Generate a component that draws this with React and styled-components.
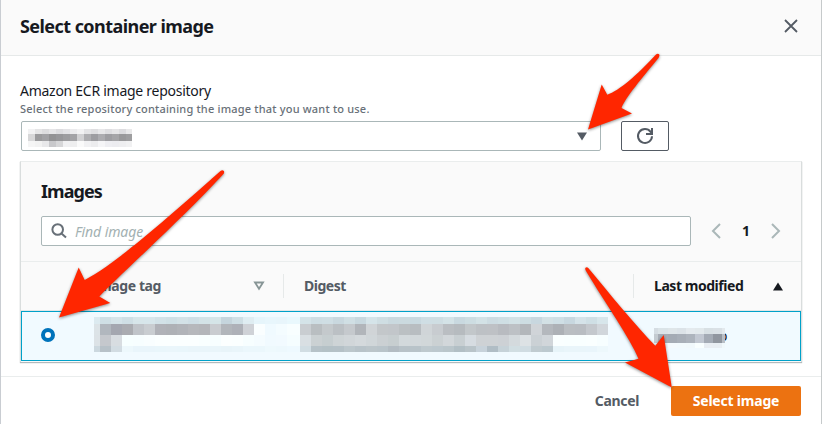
import React from "react";
import styled, { createGlobalStyle } from "styled-components";

const Global = createGlobalStyle`
  * { box-sizing: border-box; }
  body { margin: 0; background: #fff; font-family: "Noto Sans", "Open Sans", sans-serif; }
  h1 { margin: 0; }
  button, input { font-family: inherit; }
`;

const Modal = styled.section`
  position: relative;
  width: 822px;
  height: 424px;
  overflow: hidden;
  border-left: 1px solid #c9cdd2;
  border-right: 1px solid #c6cacb;
  background: #fff;
  color: #16191f;
  display: flex;
  flex-direction: column;
`;

const Header = styled.header`
  height: 56px;
  flex: none;
  display: flex;
  justify-content: space-between;
  align-items: center;
  padding: 0 22px 3px 19px;
  background: #fafafa;
  border-bottom: 1px solid #e6e9e9;
`;

const Text = styled.span`
  display: block;
  white-space: nowrap;
  font-size: ${(p) => p.$size || 14}px;
  line-height: ${(p) => p.$line || 20}px;
  font-weight: ${(p) => p.$weight || 400};
  letter-spacing: ${(p) => p.$track || 0}px;
  color: ${(p) => p.$color || "#16191f"};
`;

const IconButton = styled.button`
  display: flex;
  align-items: center;
  justify-content: center;
  padding: 0;
  border: 0;
  background: none;
  svg { display: block; }
`;

const Body = styled.main`
  height: 320px;
  flex: none;
  padding: 25px 19px 0;
`;

const PickerRow = styled.div`
  display: flex;
  gap: 20px;
  margin: 4px 0 0 1px;
`;

const Select = styled.div`
  width: 580px;
  height: 30px;
  border: 1px solid #aab7b8;
  border-radius: 2px;
  display: flex;
  justify-content: space-between;
  align-items: flex-start;
  padding: 7px 12px 0 6px;
`;

const Caret = styled.svg`
  display: block;
  margin-top: ${(p) => p.$top || 0}px;
`;

const Refresh = styled(IconButton)`
  width: 48px;
  height: 30px;
  border: 1px solid #545b64;
  border-radius: 2px;
`;

const Panel = styled.section`
  width: 782px;
  height: 201px;
  margin-top: 10px;
  border: 1px solid #d9dddd;
  border-top-color: #eaeded;
  border-bottom: 0;
  background: #fafafa;
  box-shadow: 0 1px 1px rgba(0, 28, 36, 0.3);
`;

const PanelTop = styled.div`
  height: 100px;
  padding: 17px 19px 0 20px;
  border-bottom: 1px solid #eaeded;
`;

const SearchRow = styled.div`
  display: flex;
  align-items: center;
  margin-top: 12px;
`;

const Search = styled.label`
  width: 650px;
  height: 30px;
  display: flex;
  align-items: center;
  gap: 8px;
  padding-left: 9px;
  border: 1px solid #aab7b8;
  border-radius: 2px;
  background: #fff;
`;

const SearchInput = styled.input`
  flex: 1;
  border: 0;
  outline: 0;
  padding: 0;
  background: none;
  font-size: 14px;
  font-style: italic;
  letter-spacing: -0.1px;
  &::placeholder { color: #a3b1b2; opacity: 1; }
`;

const Pager = styled.nav`
  display: flex;
  align-items: center;
  justify-content: space-between;
  width: 70px;
  margin-left: 20px;
`;

const TableHead = styled.div`
  height: 49px;
  display: grid;
  grid-template-columns: 263px 350px 167px;
  align-items: center;
  border-bottom: 1px solid #e3e6e6;
`;

const HeadCell = styled.div`
  height: 24px;
  display: flex;
  align-items: center;
  justify-content: space-between;
  padding: 0 ${(p) => (p.$last ? 17 : 18)}px 0 ${(p) => p.$left || 20}px;
  border-right: ${(p) => (p.$last ? "0" : "1px solid #e6e9e9")};
`;

const Row = styled.div`
  height: 50px;
  display: grid;
  grid-template-columns: 72px 206px 354px 1fr;
  border: 1px solid #00a1c9;
  background: #f1faff;
`;

const Cell = styled.div`
  display: flex;
  align-items: flex-start;
  padding: ${(p) => p.$pad || "5px 0 0"};
`;

const Radio = styled.span`
  width: 14px;
  height: 14px;
  border: 4px solid #0073bb;
  border-radius: 50%;
  background: #fff;
`;

const Mosaic = styled.div`
  display: grid;
  z-index: 1;
  grid-template-columns: ${(p) => p.$cols};
  grid-template-rows: ${(p) => p.$rows};
`;

const Pixel = styled.i`
  position: relative;
  background: ${(p) => p.$c};
`;

const Trailing = styled.div`
  margin: -2px 0 0 -6px;
`;

const Footer = styled.footer`
  flex: 1;
  display: flex;
  align-items: flex-start;
  justify-content: flex-end;
  gap: 32px;
  padding: 9px 20px 0;
  border-top: 1px solid #eaeded;
`;

const FooterButton = styled.button`
  height: 30px;
  width: ${(p) => (p.$primary ? "130px" : "auto")};
  display: flex;
  align-items: center;
  justify-content: center;
  padding: 0;
  border: 0;
  border-radius: 2px;
  background: ${(p) => (p.$primary ? "#ec7211" : "transparent")};
`;

const Arrows = styled.svg`
  position: absolute;
  top: 0;
  left: -1px;
  z-index: 2;
  pointer-events: none;
  path { fill: #ff2600; filter: drop-shadow(0 1.5px 1.5px rgba(0, 0, 0, 0.45)); }
`;

const repo = [
  "f2f2f3 e5e5e6 dddddf e5e5e7 dcdcdf e3e3e6 ebebed f2f2f3 e4e4e6 dedee0 e7e7e9 dedee1 e5e5e7 dcdcdf e9e9ea",
  "d7d7d8 9b9b9d a2a2a5 929294 97979a 9d9da0 a3a3a6 d1d1d3 aeaeb1 9d9da1 acacb0 9e9ea2 a5a5a8 99999b 9e9ea0",
  "f5f5f5 f2f2f2 e8e8ea c8c8cb d6d6d8 f0f0f2 eeeeef fafafa f1f1f3 ececee f5f5f7 eeeef2 ececf0 eeeef0 f1f1f2",
];
const tag = [
  "dceaf0 cfdfe5 d5e4e9 cfdfe5 d7e6ea d7e6eb d2e2e8 cfe0e6 d3e2e7 cfdfe6 d3e3e7 d5e5e8 c5d5dd cfdfe5 dfedf2 e6f5fb e8f6fc e8f5fb e9f8fd",
  "dce3e7 b1b7be a4a7b0 aaacb1 c0c4c9 c9cdd1 b0b2b8 aeb1b6 b1b4b9 b6b8bc b4b6ba c9ccd0 b2b6bb aeb1b8 cfd2d7 fafeff f0faff f4fcff f8feff",
  "dce2e6 c5c8cd d8dde1 f7ffff f7feff f9feff fbffff fbffff fbffff fbffff f9ffff f7feff fcffff fbffff f7feff f5fcff f1faff f2faff f5fdff",
  "ccd8df b7c1c8 d2dce2 edf8fc e9f5fb e9f5fb e9f6fb eaf6fb e9f6fb e9f5fa e9f5fa e9f5fa e8f4f9 e9f5fa ebf7fc ebf7fc eef9fd edf8fd eef9ff",
];
const digest = [
  "d4e3e8 cedde3 cfdee4 c9d8df d0dfe4 c8d8df d5e4e9 cfdee3 cad9df cbdadf c9d9e0 cfdee4 cfdee3 d4e3e7 c9d9e0 cddde2 d3e2e6 cddce2 cfdfe4 d3e2e6 cddde2 c8d7df d3e1e5 cfdfe5 c8d8e0 d5e3e9 cfdfe5 d7e6eb",
  "c9cdd1 b9bec1 c4c9cc bbc0c4 c5c9cd b1b5ba d0d4d7 c3c7ca c2c6ca bbc0c3 b8bdc1 d0d5d8 c8ccd0 babec2 b6bbbf c2c7ca bdc1c5 bec1c5 b8bbc0 bdc1c5 b3b7bb d0d4d8 b4b8bd adb1b6 babec2 b9bdc2 c4c8cd d1d6db",
  "d9dfe3 cbd1d3 c6ced0 ced4d6 d1d6d9 d4d9dc d0d6d9 cbd0d3 c7ced0 d3d9dc d2d8db d1d7d9 cbd1d3 d2d7da c8cfd2 d6dce1 ced2d5 ced2d5 cdd1d5 d4dadd dde2e5 cbd1d5 d1d6da faffff f9ffff f9ffff faffff f7feff",
  "d1dde3 b6c2c8 b4c1c6 b5c1c7 bcc7cc b8c3c9 bbc5ca b9c4ca b3bcc3 b8c2c8 b8c3c9 bec9ce bcc8ce bac6cb b2bfc5 b9c4c9 c7d2da b0bdc5 c6d2d8 d1dee2 d0dce2 c0cbd0 bcc9cf e7f4f9 e9f5fa e9f5fa e9f5fb edf8fc",
];
const modified = [
  "d5dde3 dbe4e8 dfe6e9 dce3e8 e4eaee e2e9ec d8e0e4 dae1e6 e3e9ed",
  "c4cbd1 a7adb6 a4abb4 a8afb8 adb4bd c2c8d2 a4abb5 90969f b8bec6",
  "f0f8fc edf6fa f4fafd f2fafd f1f9fc f9ffff e9eef3 e8eef3 f0f8fb",
];

function Redacted({ rows, cols, heights }) {
  return (
    <Mosaic $cols={cols} $rows={heights}>
      {rows.flatMap((r, y) => r.split(" ").map((c, x) => <Pixel key={`${y}-${x}`} $c={`#${c}`} />))}
    </Mosaic>
  );
}

export default function App() {
  return (
    <>
      <Global />
      <Modal>
        <Header>
          <Text as="h1" $size={18} $line={24} $weight={700} $track={-0.56}>Select container image</Text>
          <IconButton aria-label="Close">
            <svg width="16" height="16" viewBox="0 0 16 16" fill="none" stroke="#545b64" strokeWidth="1.8">
              <path d="M2 2l12 12M14 2L2 14" />
            </svg>
          </IconButton>
        </Header>
        <Body>
          <Text $track={-0.27}>Amazon ECR image repository</Text>
          <Text $size={11} $line={16} $weight={500} $track={0.19} $color="#687078">Select the repository containing the image that you want to use.</Text>
          <PickerRow>
            <Select>
              <Redacted rows={repo} cols="repeat(14, 7px) 6px" heights="5px 7px 6px" />
              <Caret $top={3} width="12" height="9" viewBox="0 0 12 9"><path d="M1 .5h10L6 8.5z" fill="#545b64" /></Caret>
            </Select>
            <Refresh aria-label="Refresh">
              <svg width="18" height="18" viewBox="0 0 18 18" fill="none" stroke="#545b64" strokeWidth="2">
                <path d="M16 9.2A7 7 0 1 1 14.6 4.8L16 6.2" />
                <path d="M16 1v6h-6" />
              </svg>
            </Refresh>
          </PickerRow>
          <Panel>
            <PanelTop>
              <Text $size={18} $line={25} $weight={700} $track={-0.95}>Images</Text>
              <SearchRow>
                <Search>
                  <svg width="16" height="16" viewBox="0 0 16 16" fill="none" stroke="#687078" strokeWidth="2">
                    <circle cx="6.7" cy="6.5" r="5.3" />
                    <path d="M10.5 10.5l4.5 4" />
                  </svg>
                  <SearchInput placeholder="Find image" />
                </Search>
                <Pager>
                  <svg width="10" height="16" viewBox="0 0 10 16" fill="none" stroke="#aab7b8" strokeWidth="2"><path d="M9 1L2 8l7 7" /></svg>
                  <Text $weight={700}>1</Text>
                  <svg width="10" height="16" viewBox="0 0 10 16" fill="none" stroke="#aab7b8" strokeWidth="2"><path d="M1 1l7 7-7 7" /></svg>
                </Pager>
              </SearchRow>
            </PanelTop>
            <TableHead>
              <HeadCell $left={72}>
                <Text $weight={700} $track={-0.4} $color="#545b64">Image tag</Text>
                <Caret width="12" height="10" viewBox="0 0 12 10"><path d="M2 1.5h8L6 7.8z" fill="none" stroke="#879596" strokeWidth="1.8" /></Caret>
              </HeadCell>
              <HeadCell><Text $weight={700} $track={-0.5} $color="#545b64">Digest</Text></HeadCell>
              <HeadCell $last>
                <Text $weight={700} $track={-0.45}>Last modified</Text>
                <Caret width="12" height="9" viewBox="0 0 12 9"><path d="M1 8.5h10L6 .5z" fill="#16191f" /></Caret>
              </HeadCell>
            </TableHead>
            <Row>
              <Cell $pad="16px 0 0 19px"><Radio /></Cell>
              <Cell><Redacted rows={tag} cols="6px repeat(17, 11px) 13px" heights="7px 11px 11px 6px" /></Cell>
              <Cell><Redacted rows={digest} cols="repeat(28, 11px)" heights="7px 11px 11px 6px" /></Cell>
              <Cell $pad="16px 0 0">
                <Redacted rows={modified} cols="4px 10px repeat(6, 9px) 3px" heights="6px 9px 5px" />
                <Trailing><Text>o</Text></Trailing>
              </Cell>
            </Row>
          </Panel>
        </Body>
        <Footer>
          <FooterButton><Text $weight={700} $track={-0.35} $color="#545b64">Cancel</Text></FooterButton>
          <FooterButton $primary><Text $weight={700} $track={-0.2} $color="#fff">Select image</Text></FooterButton>
        </Footer>
        <Arrows width="822" height="424" viewBox="0 0 822 424">
          <path d="M588 129.5L601.7 84.5L607.3 94.7C619 91 637 75 656 54.5Q658 53 659.3 54.6Q660 56 658.5 58C642 78 626 97 621.5 108L632 113.6Z" />
          <path d="M59 317.5L78.7 267.5L84.7 280C116 264 174 212 220.5 171Q222.5 169.5 223.8 171Q224.8 172.5 223 174.5C183 218 128 267 99.3 296.5L110.3 303Z" />
          <path d="M671.8 387.5L663.7 335L655.3 345.7C635 325 609 293 588.5 268.3Q587 266.5 585.5 267.7Q584.7 269 586 271C605 303 630 338 638.5 358.7L625 362.5Z" />
        </Arrows>
      </Modal>
    </>
  );
}
